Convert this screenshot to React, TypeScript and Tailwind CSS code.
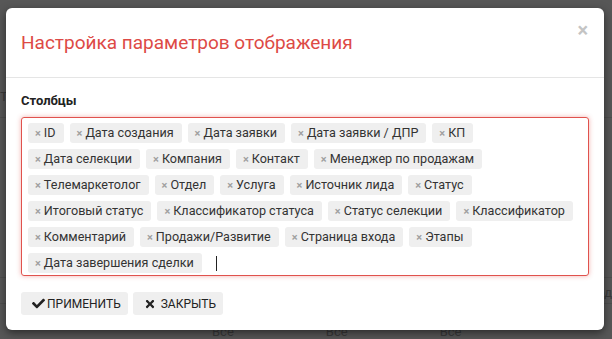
import { FaCheck, FaTimes } from 'react-icons/fa';

const COLUMNS = [
  'ID',
  'Дата создания',
  'Дата заявки',
  'Дата заявки / ДПР',
  'КП',
  'Дата селекции',
  'Компания',
  'Контакт',
  'Менеджер по продажам',
  'Телемаркетолог',
  'Отдел',
  'Услуга',
  'Источник лида',
  'Статус',
  'Итоговый статус',
  'Классификатор статуса',
  'Статус селекции',
  'Классификатор',
  'Комментарий',
  'Продажи/Развитие',
  'Страница входа',
  'Этапы',
  'Дата завершения сделки',
];

function Tag({ label }: { label: string }) {
  return (
    <span className="flex items-center h-[20px] pl-[7px] pr-[8px] bg-[#efefef] rounded-[3px] text-[12.6px] text-[#333] leading-none">
      <span className="text-[11px] font-bold text-[#a0a0a0] mr-[3px]">×</span>
      {label}
    </span>
  );
}

export default function App() {
  return (
    <div
      className="relative w-[612px] h-[339px] overflow-hidden bg-[#575757]"
      style={{ fontFamily: 'Roboto, "Liberation Sans", sans-serif' }}
    >
      {/* dimmed page behind the modal */}
      <div className="flex flex-col pt-[88px] text-[#3a3a3a] text-[13px] leading-none">
        <div className="h-[30px] border-b border-[#4e4e4e] pt-[2px]">Т</div>
        <div className="h-[160px] border-b border-[#4e4e4e]" />
        <div className="h-[26px] border-b border-[#4e4e4e] text-right pt-[8px]">од</div>
        <div className="flex h-[35px] gap-[92px] pl-[212px] pt-[21px]">
          <span>Все</span>
          <span>Все</span>
          <span>Все</span>
        </div>
      </div>

      {/* modal */}
      <div className="absolute left-[6px] top-[8px] w-[598px] h-[322px] bg-white rounded-[6px] shadow-[0_3px_9px_rgba(0,0,0,0.5)] flex flex-col">
        <div className="flex items-center justify-between h-[70px] px-[15px] border-b border-[#e5e5e5]">
          <h4 className="text-[19px] text-[#dd4a46] font-normal pt-[2px]">Настройка параметров отображения</h4>
          <span className="text-[20px] font-bold text-[#c4c4c4] leading-none -mt-[26px] mr-[1px]">×</span>
        </div>

        <div className="px-[15px] pt-[16px]">
          <div className="text-[13px] font-bold text-[#222] leading-none mb-[10px]">Столбцы</div>
          <div className="flex flex-wrap content-start gap-x-[6px] gap-y-[6px] h-[159px] px-[6px] pt-[5px] border border-[#e0524d] rounded-[3px] shadow-[0_0_5px_rgba(224,82,77,0.45)]">
            {COLUMNS.map((c) => (
              <Tag key={c} label={c} />
            ))}
            <span className="flex items-center h-[20px] pl-[8px]">
              <span className="w-px h-[15px] bg-[#222]" />
            </span>
          </div>
        </div>

        <div className="flex gap-[5px] px-[15px] pt-[16px]">
          <button className="flex items-center gap-[2px] h-[23px] pl-[11px] pr-[7px] bg-[#efefef] rounded-[3px] text-[12px] text-[#222]">
            <FaCheck className="w-[13px] h-[13px]" />
            ПРИМЕНИТЬ
          </button>
          <button className="flex items-center gap-[5px] h-[23px] pl-[11px] pr-[7px] bg-[#efefef] rounded-[3px] text-[12px] text-[#222]">
            <FaTimes className="w-[12px] h-[12px]" />
            ЗАКРЫТЬ
          </button>
        </div>
      </div>
    </div>
  );
}
